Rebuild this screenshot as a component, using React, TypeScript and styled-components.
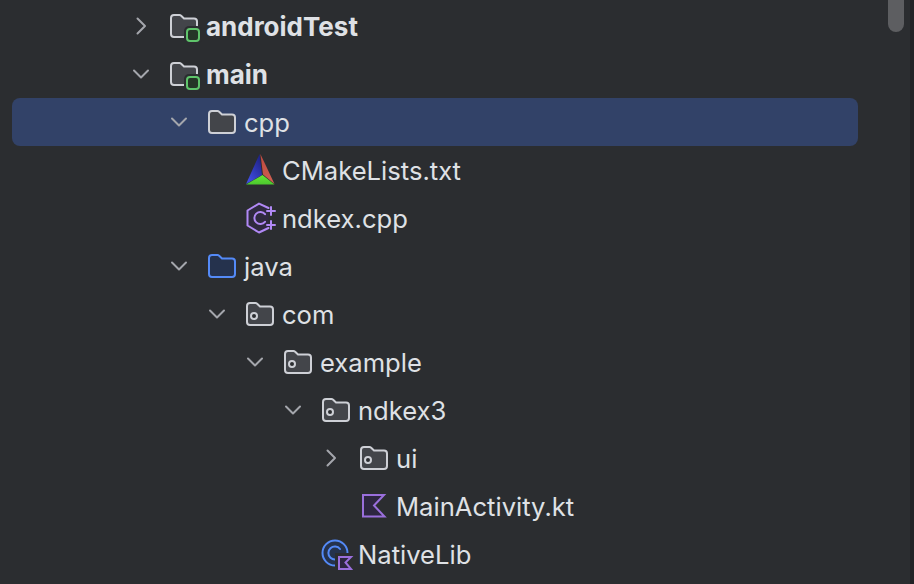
import React from "react";
import styled, { createGlobalStyle } from "styled-components";

const Global = createGlobalStyle`
  html, body { margin: 0; padding: 0; background: #2b2d30; }
  body { font-family: Inter, "Noto Sans", sans-serif; }
`;

const Window = styled.div`
  width: 914px;
  height: 584px;
  display: flex;
  overflow: hidden;
  background: #2b2d30;
`;

const Panel = styled.div`
  position: relative;
  flex: 1;
  min-width: 0;
`;

const EdgeStrip = styled.div`
  width: 4px;
  background: #222326;
`;

const Scrollbar = styled.div`
  position: absolute;
  top: -8px;
  left: 888px;
  width: 16px;
  height: 40px;
  border-radius: 8px;
  background: #5d5e61;
`;

const Tree = styled.div`
  width: 846px;
  margin: 2px 0 0 12px;
  display: flex;
  flex-direction: column;
`;

const Row = styled.div<{ $depth: number; $selected?: boolean }>`
  height: 48px;
  display: flex;
  align-items: center;
  box-sizing: border-box;
  padding-left: ${(p) => 117 + p.$depth * 38}px;
  border-radius: 8px;
  background: ${(p) => (p.$selected ? "#324268" : "transparent")};
`;

const ChevronSlot = styled.span`
  width: 24px;
  height: 24px;
  flex: none;
  margin-right: 15px;
  display: block;
`;

const IconSlot = styled.span`
  width: 32px;
  height: 32px;
  flex: none;
  display: block;
  margin-right: 6px;
  svg { display: block; overflow: visible; }
`;

const Label = styled.span<{ $bold?: boolean }>`
  font-size: ${(p) => (p.$bold ? 26 : 25.6)}px;
  font-weight: ${(p) => (p.$bold ? 700 : 400)};
  color: #dfe1e5;
  white-space: nowrap;
  line-height: 48px;
  padding-top: 2px;
`;

type Kind = "module" | "folder" | "source" | "package" | "cmake" | "cpp" | "kotlin" | "class";

const FOLDER = "M3 8a3 3 0 0 1 3-3h5.5a2 2 0 0 1 1.4.6L16 8.5h10a3 3 0 0 1 3 3V24a3 3 0 0 1-3 3H6a3 3 0 0 1-3-3z";

function Chevron({ open }: { open: boolean }) {
  return (
    <svg width="24" height="24" viewBox="0 0 24 24" fill="none" stroke="#a4a6ac" strokeWidth="2" strokeLinecap="round" strokeLinejoin="round">
      <path d={open ? "M5 8.5l7 7 7-7" : "M8.5 4.5l7.5 7.5-7.5 7.5"} />
    </svg>
  );
}

function Icon({ kind, id }: { kind: Kind; id: string }) {
  const svg = (c: React.ReactNode) => (
    <svg width="32" height="32" viewBox="0 0 32 32" fill="none">{c}</svg>
  );
  switch (kind) {
    case "module":
      return svg(
        <>
          <path d={FOLDER} fill="#43454a" stroke="#ced0d6" strokeWidth="2" />
          <rect x="16" y="16" width="18" height="18" rx="5" fill="#2b2d30" />
          <rect x="19" y="19" width="12" height="12" rx="3" fill="#253627" stroke="#5fc46b" strokeWidth="2" />
        </>
      );
    case "folder":
      return svg(<path d={FOLDER} fill="#43454a" stroke="#ced0d6" strokeWidth="2" />);
    case "source":
      return svg(<path d={FOLDER} fill="#25324d" stroke="#548af7" strokeWidth="2" />);
    case "package":
      return svg(
        <>
          <path d={FOLDER} fill="#43454a" stroke="#ced0d6" strokeWidth="2" />
          <circle cx="10" cy="18" r="3" fill="#2b2d30" stroke="#ced0d6" strokeWidth="2" />
        </>
      );
    case "cmake":
      return svg(
        <>
          <defs>
            <linearGradient id={id + "b"} x1="0.8" y1="0.1" x2="0.2" y2="0.9">
              <stop offset="0" stopColor="#20248a" />
              <stop offset="1" stopColor="#3f4ce0" />
            </linearGradient>
            <linearGradient id={id + "r"} x1="0.2" y1="0" x2="0.8" y2="1">
              <stop offset="0" stopColor="#c04a40" />
              <stop offset="1" stopColor="#cf6152" />
            </linearGradient>
            <linearGradient id={id + "g"} x1="0.5" y1="0" x2="0.5" y2="1">
              <stop offset="0" stopColor="#66e636" />
              <stop offset="1" stopColor="#4cc82e" />
            </linearGradient>
          </defs>
          <path d="M15.6 0 2 30 18 21z" fill={`url(#${id}b)`} />
          <path d="M16.4 0 30.5 30 19 20.5z" fill={`url(#${id}r)`} />
          <path d="M2 30.5 18.5 21 30.5 30.5z" fill={`url(#${id}g)`} />
        </>
      );
    case "cpp":
      return svg(
        <g stroke="#b189f5" strokeWidth="2" strokeLinecap="round" strokeLinejoin="round">
          <path d="M24.5 6 15 1.6 3.5 8.5v15L15 30.5l9.5-4.5" fill="#2f2a3f" />
          <path d="M21 12.2a6 6 0 1 0 0 7.6" />
          <path d="M27 5v8M23 9h8M27 19v8M23 23h8" />
        </g>
      );
    case "kotlin":
      return svg(<path d="M5 5h21L16 15.5 26.5 26.5H5z" fill="#2d2640" stroke="#9a6fdc" strokeWidth="2" strokeLinejoin="miter" />);
    case "class":
      return svg(
        <>
          <circle cx="15" cy="15" r="12.5" fill="#25324d" stroke="#548af7" strokeWidth="2" />
          <path d="M20 11a6.5 6.5 0 1 0 0 8" stroke="#548af7" strokeWidth="2" strokeLinecap="round" />
          <rect x="15" y="15" width="18" height="18" fill="#2b2d30" />
          <path d="M19 19h12l-5.5 5.5L31 31H19z" fill="#2d2640" stroke="#9a6fdc" strokeWidth="2" />
        </>
      );
  }
}

type Item = { name: string; depth: number; kind: Kind; open?: boolean; bold?: boolean; selected?: boolean };

const items: Item[] = [
  { name: "androidTest", depth: 0, kind: "module", open: false, bold: true },
  { name: "main", depth: 0, kind: "module", open: true, bold: true },
  { name: "cpp", depth: 1, kind: "folder", open: true, selected: true },
  { name: "CMakeLists.txt", depth: 2, kind: "cmake" },
  { name: "ndkex.cpp", depth: 2, kind: "cpp" },
  { name: "java", depth: 1, kind: "source", open: true },
  { name: "com", depth: 2, kind: "package", open: true },
  { name: "example", depth: 3, kind: "package", open: true },
  { name: "ndkex3", depth: 4, kind: "package", open: true },
  { name: "ui", depth: 5, kind: "package", open: false },
  { name: "MainActivity.kt", depth: 5, kind: "kotlin" },
  { name: "NativeLib", depth: 4, kind: "class" },
];

export default function App() {
  return (
    <Window>
      <Global />
      <Panel>
        <Tree>
          {items.map((it, i) => (
            <Row key={it.name} $depth={it.depth} $selected={it.selected}>
              <ChevronSlot>{it.open !== undefined && <Chevron open={it.open} />}</ChevronSlot>
              <IconSlot><Icon kind={it.kind} id={"i" + i} /></IconSlot>
              <Label $bold={it.bold}>{it.name}</Label>
            </Row>
          ))}
        </Tree>
        <Scrollbar />
      </Panel>
      <EdgeStrip />
    </Window>
  );
}
